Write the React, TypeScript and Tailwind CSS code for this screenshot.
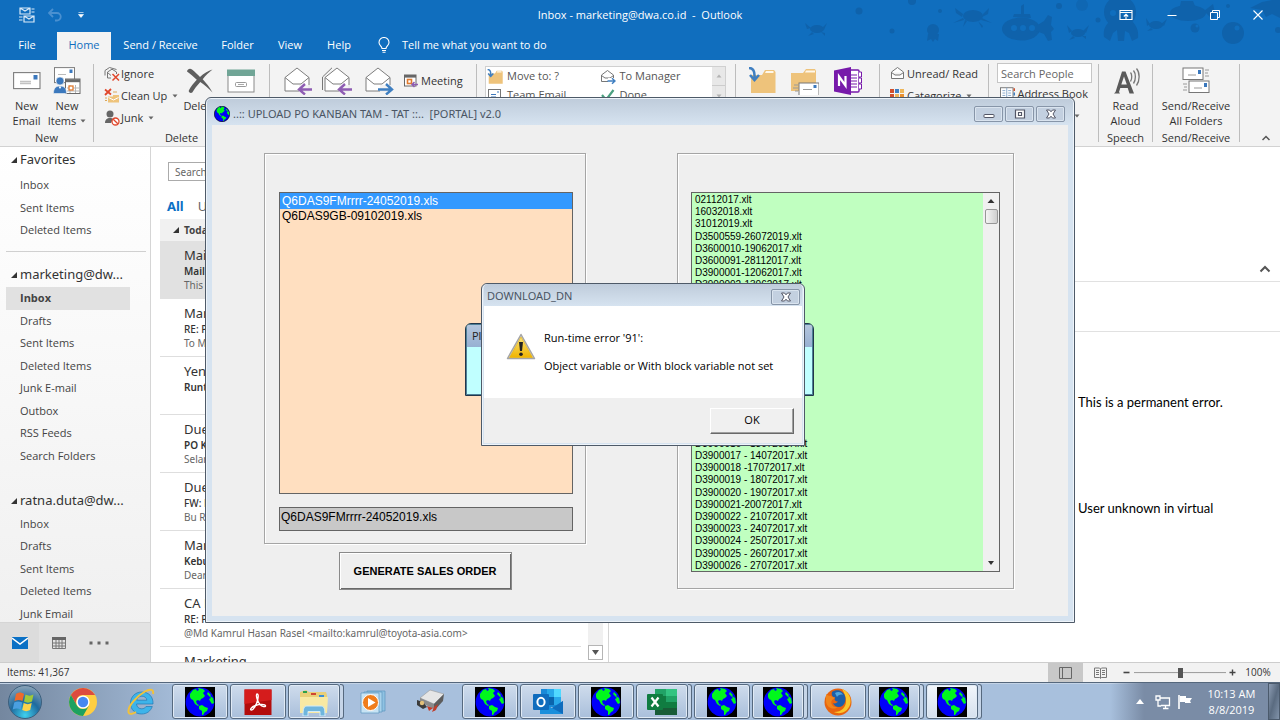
import type { ReactNode } from "react";

/* ---------- small drawings ---------- */

function Globe({ className, square = true }: { className: string; square?: boolean }) {
  return (
    <svg viewBox="0 0 30 30" className={className} aria-hidden="true">
      {square && <rect width="30" height="30" fill="#000" />}
      <circle cx="15" cy="15" r="14.4" fill="#0000fa" stroke="#000" strokeWidth={square ? 0 : 1.2} />
      <path
        d="M5 7 L8 3 L11 2 L12 4 L14 3 L13 1 L18 2 L20 4 L18 6 L20 9 L18 11 L16 12 L15 14 L13 13 L11 14 L12 17 L14 18 L13 19 L10 17 L8 13 L6 12 L5 10 Z"
        fill="#00f81c"
      />
      <path d="M14 19 L17 18 L20 20 L23 21 L22 24 L20 25 L18 28 L17 28 L17 24 L14 22 Z" fill="#00f81c" />
      <path d="M23 5 L26 8 L25 9 L28 11 L29 16 L27 17 L25 14 L24 12 L26 11 L24 9 L22 7 Z" fill="#00f81c" />
    </svg>
  );
}

function Caret({ className = "" }: { className?: string }) {
  return (
    <svg viewBox="0 0 6 4" className={`h-1 w-1.5 ${className}`} aria-hidden="true">
      <path d="M0.5 0.5h5L3 3.5z" fill="#666" />
    </svg>
  );
}

function Triangle() {
  return (
    <svg viewBox="0 0 7 7" className="size-[6px] shrink-0" aria-hidden="true">
      <path d="M7 0v7H0z" fill="#333" />
    </svg>
  );
}

function EnvelopeIcon() {
  return (
    <svg viewBox="0 0 28 28" className="size-7" aria-hidden="true">
      <rect x="0.6" y="5.6" width="26.4" height="16" fill="#fff" stroke="#7d7d7d" strokeWidth="1.1" />
      <rect x="20.5" y="8" width="4" height="4.5" fill="#3b78bd" />
      <path d="M7 14.5h11M7 16.5h11" stroke="#c2c2c2" strokeWidth="1.4" />
    </svg>
  );
}

function NewItemsIcon() {
  return (
    <svg viewBox="0 0 28 28" className="size-7" aria-hidden="true">
      <rect x="1.5" y="0.6" width="20" height="15" fill="#fff" stroke="#7d7d7d" />
      <rect x="16.5" y="2.5" width="3" height="3.5" fill="#3b78bd" />
      <path d="M5 7.5h8" stroke="#bbb" />
      <rect x="12.5" y="12" width="14.5" height="14.5" fill="#fff" stroke="#6a6a6a" />
      <path d="M12.5 13.7h14.5" stroke="#6a6a6a" strokeWidth="3" />
      <path d="M17 18v8M22.500 18v8M14 21h12M14 24h12" stroke="#b5b5b5" />
      <rect x="16" y="19" width="4" height="4" fill="#fff" stroke="#e07a2f" strokeWidth="1.3" />
      <circle cx="7" cy="14" r="4" fill="#3b78bd" stroke="#f3f3f3" strokeWidth="0.6" />
      <path d="M0.500 26.500c0-5 2-7.500 6.500-7.500s6.500 2.500 6.500 7.500z" fill="#3b78bd" stroke="#f3f3f3" strokeWidth="0.6" />
      <path d="M5.500 19.500L7 22l1.500-2.500z" fill="#fff" />
    </svg>
  );
}

function IgnoreIcon() {
  return (
    <svg viewBox="0 0 16 16" className="size-4" aria-hidden="true">
      <path d="M1 9.500V4.500L5.500 1.500L12.500 3.500M3.500 12V6L8 3.200L12.500 6v2M3.500 6.500L7 9.500M3.500 12H7" fill="none" stroke="#777" />
      <path d="M8.500 8l6.500 6.500M15 8l-6.500 6.500" stroke="#e0472c" strokeWidth="1.5" />
    </svg>
  );
}

function CleanUpIcon() {
  return (
    <svg viewBox="0 0 16 16" className="size-4" aria-hidden="true">
      <path d="M1 1.500l6 5M7 1l-6 6" stroke="#e0472c" strokeWidth="1.800" />
      <path d="M4 8.500h5V7h6v7.500H4z" fill="#eec37b" />
      <path d="M4.500 9.500L9.500 12l5-2.500" fill="none" stroke="#fff" />
      <path d="M1 10h2M1 12.500h2M9 4h4" stroke="#dba85a" />
    </svg>
  );
}

function JunkIcon() {
  return (
    <svg viewBox="0 0 16 16" className="size-4" aria-hidden="true">
      <circle cx="6" cy="4" r="3.500" fill="#666" />
      <path d="M1 13c0-3.500 2-5 5-5 1.500 0 2.500.4 3 1l-2 4z" fill="#666" />
      <circle cx="11.500" cy="11.500" r="3.500" fill="#fff" stroke="#e0472c" strokeWidth="1.300" />
      <path d="M9.200 9.200l4.600 4.600" stroke="#e0472c" strokeWidth="1.300" />
    </svg>
  );
}

function DeleteIcon() {
  return (
    <svg viewBox="0 0 28 28" className="size-7" aria-hidden="true">
      <path
        d="M1 4.500C1.500 2 4 1 6 2.500c3 2.200 5.500 5 8 7.500 3.500-3.500 8-6 12.500-7.500-3.500 3-7 6-9.800 9.800 3.500 3.700 7 8 9.800 13.200-4-4-8-7.800-12.200-10.500-3.300 3.500-6 7-8 10.500-1.500 1-4 0-3.500-2 2-4 5-7.500 8-10.700C7.500 9.500 4 6.500 1 4.500z"
        fill="#5e5e5e"
      />
    </svg>
  );
}

function ArchiveIcon() {
  return (
    <svg viewBox="0 0 28 28" className="size-7" aria-hidden="true">
      <rect x="1" y="8" width="26" height="17" fill="#fff" stroke="#8a8a8a" />
      <rect x="0" y="2.500" width="28" height="6.500" fill="#70a596" />
      <rect x="8.500" y="15.500" width="11" height="4" rx="1" fill="#fff" stroke="#999" />
      <path d="M11 17.500h6" stroke="#aaa" />
    </svg>
  );
}

function OpenMail({ arrow, all = false }: { arrow: "left" | "right"; all?: boolean }) {
  return (
    <svg viewBox="0 0 32 28" className="h-7 w-8" aria-hidden="true">
      {all && <path d="M1.500 23V10L11 0.800" fill="none" stroke="#777" />}
      <path d="M4 24V10.500L16 1l12 9.500V24z" fill="#fff" stroke="#7d7d7d" />
      <path d="M4 10.500L12 17h8l8-6.500" fill="none" stroke="#7d7d7d" />
      <path d="M18 18h12v10H18z" fill="#f3f3f3" opacity="0.9" />
      {arrow === "left" ? (
        <path d="M31 22.500H18.500M24 17l-6 5.500 6 5" fill="none" stroke="#8e5db3" strokeWidth="2.400" />
      ) : (
        <path d="M16 22.500h13M24 17l6 5.500-6 5" fill="none" stroke="#3f7fc1" strokeWidth="2.400" />
      )}
    </svg>
  );
}

function MeetingIcon() {
  return (
    <svg viewBox="0 0 14 14" className="size-3.5" aria-hidden="true">
      <rect x="0.500" y="1" width="11.500" height="11" fill="#fff" stroke="#666" />
      <path d="M0.500 2.300h11.500" stroke="#666" strokeWidth="2.600" />
      <rect x="3.500" y="5.500" width="4" height="4" fill="#fff" stroke="#e07a2f" strokeWidth="1.600" />
      <path d="M14 10.500H8M10.500 8L8 10.500l2.500 2.500" fill="none" stroke="#8e5db3" strokeWidth="1.500" />
    </svg>
  );
}

function FolderMoveIcon({ className }: { className: string }) {
  return (
    <svg viewBox="0 0 28 28" className={className} aria-hidden="true">
      <path d="M3 26V8h11l3-5h9l1.500 2V26z" fill="#eec37b" />
      <path d="M18 4h7.500v2H17z" fill="#fff8ea" />
      <path d="M1 1c4 0 6 3 5.500 10M2 8l4.500 5L11 8" fill="none" stroke="#3f7fc1" strokeWidth="2.600" />
    </svg>
  );
}

function FolderRulesIcon() {
  return (
    <svg viewBox="0 0 28 28" className="size-7" aria-hidden="true">
      <path d="M0 24V6h12l3-4h9l1 2V24z" fill="#eec37b" />
      <path d="M15 3.500h9v2H14z" fill="#fff8ea" />
      <rect x="8" y="16" width="20" height="13" fill="#fff" stroke="#777" />
      <rect x="22.500" y="18" width="3" height="3" fill="#3b78bd" />
      <path d="M12 22.500h9M3 18h4M2 21h5M4 24h3" stroke="#999" />
    </svg>
  );
}

function OneNoteIcon() {
  return (
    <svg viewBox="0 0 28 28" className="size-7" aria-hidden="true">
      <rect x="14" y="3" width="11" height="22" rx="1" fill="#fff" stroke="#7719aa" strokeWidth="1.400" />
      <path d="M17 8h6M17 11h6M17 14h6M17 17h6M17 20h6" stroke="#7719aa" />
      <path d="M25 5h2.500v5H25M25 11h2.500v5H25M25 17h2.500v5H25" fill="#fff" stroke="#7719aa" />
      <path d="M0 3.500L17 0v28L0 24.500z" fill="#7719aa" />
      <path d="M5 19V9.500l6.500 9V9" fill="none" stroke="#fff" strokeWidth="2.200" />
    </svg>
  );
}

function SmallMailIcon({ arrow = false }: { arrow?: boolean }) {
  return (
    <svg viewBox="0 0 16 16" className="size-4" aria-hidden="true">
      <path d="M1.500 12.500V6L7.500 1.500 13.500 6v6.500zM1.500 6.500L5 9h5l3.500-2.500" fill="#fff" stroke="#777" />
      {arrow && <path d="M8 9h8v7H8z" fill="#fff" />}
      {arrow && <path d="M7.500 12h7M12 9.200l3 2.800-3 2.800" fill="none" stroke="#3f7fc1" strokeWidth="1.500" />}
    </svg>
  );
}

function TeamMailIcon() {
  return (
    <svg viewBox="0 0 16 16" className="size-4" aria-hidden="true">
      <rect x="1.500" y="1.500" width="12" height="11" fill="#fff" stroke="#777" />
      <path d="M11 3v2M4 6.500h5M4 9h5" stroke="#3b78bd" />
    </svg>
  );
}

function DoneIcon() {
  return (
    <svg viewBox="0 0 16 16" className="size-4" aria-hidden="true">
      <path d="M2 7l4 5 7.500-10" fill="none" stroke="#4ba080" strokeWidth="2.200" />
    </svg>
  );
}

function CategorizeIcon() {
  return (
    <svg viewBox="0 0 14 14" className="mr-0.5 size-3.5" aria-hidden="true">
      <path d="M0 0h4v4H0z" fill="#d04f2b" />
      <path d="M5 0h4v4H5zM5 10h4v4H5z" fill="#3f7fc1" />
      <path d="M10 0h4v4h-4zM5 5h4v4H5z" fill="#eeb65a" />
      <path d="M10 5h4v4h-4zM0 10h4v4H0z" fill="#e9902f" />
      <path d="M0 5h4v4H0z" fill="#d04f2b" />
    </svg>
  );
}

function AddressBookIcon() {
  return (
    <svg viewBox="0 0 16 16" className="mr-px ml-[3px] size-4" aria-hidden="true">
      <rect x="0.500" y="1.500" width="13" height="13" fill="#fff" stroke="#777" />
      <path d="M7 1.500v13M2.500 4.500h3M2.500 7h3M2.500 9.500h3M8.500 4.500h3M8.500 7h3M8.500 9.500h3" stroke="#8aa9cb" />
      <path d="M15 2v3" stroke="#d04f2b" strokeWidth="2" />
      <path d="M15 6.500v3" stroke="#3f7fc1" strokeWidth="2" />
    </svg>
  );
}

function ReadAloudIcon() {
  return (
    <svg viewBox="0 0 28 28" className="size-7" aria-hidden="true">
      <path d="M2 26.500h6l-1-1.500 1.300-4h7.400l1.800 5.500h4.500L13.500 4.500H10L3.500 25zM9.300 17.500L12 9.500l2.800 8z" fill="#5a5a5a" />
      <path d="M18.500 5.500c1.500 1.500 1.800 6.500 0 9M21.500 3.500c2.500 3 2.500 9.500 0 13M24.500 1.500c3.500 4 3.500 12.500 0 17" fill="none" stroke="#777" strokeWidth="1.300" />
    </svg>
  );
}

function SendReceiveIcon() {
  return (
    <svg viewBox="0 0 28 28" className="size-7" aria-hidden="true">
      <rect x="1" y="1" width="20" height="11.500" fill="#fff" stroke="#777" />
      <rect x="16" y="3" width="3" height="4" fill="#3b78bd" />
      <path d="M6 8h8M23 3h4M23 6h3M23 9h4" stroke="#999" />
      <rect x="7" y="14" width="20" height="11.500" fill="#fff" stroke="#777" />
      <rect x="22" y="16" width="3" height="4" fill="#3b78bd" />
      <path d="M12 21h8M1 17h4M2 20h3M1 23h4" stroke="#999" />
    </svg>
  );
}

/* ---------- title bar backdrop ---------- */

function SeaBackdrop() {
  return (
    <svg viewBox="0 0 500 60" className="absolute top-0 right-0 h-[60px] w-[500px]" aria-hidden="true">
      <g fill="#0f62ab">
        <ellipse cx="241" cy="29" rx="19" ry="11.500" />
        <path d="M233 17l1-3h16l1 4zM241 14V6l3-2v10z" />
        <path d="M256 26l8-5 4-6 4 2-1 8 3 4-3 3 1 8-4 1-4-7-8-3z" />
        <circle cx="340" cy="12" r="16" />
        <path d="M329 22c-4 4-6 8-5 15l6 4 3-8 4-3 1 11h6l1-10 4 2 3 8 6-3c1-8-2-12-5-16z" />
        <circle cx="153" cy="30" r="6" />
        <path d="M148 34l-1 7 4-2 2 3 2-3 3 2 1-7z" />
        <ellipse cx="193" cy="16" rx="10" ry="6" />
        <path d="M183 14l-8-6 1 5 6 4zM203 14l6-6-1 6-6 3zM183 18l-10 5 11-3zM202 18l10 5-11-3zM187 21l-4 6 2-7zM198 21l4 7 1-2z" />
        <ellipse cx="37" cy="29" rx="7" ry="4" />
        <path d="M31 28l-6-5 2 6zM42 28l5-5-3 7zM32 32l-4 4 6-2zM41 32l4 4 0-3z" />
        <ellipse cx="298" cy="33" rx="7" ry="4" />
        <path d="M292 31l-5-6 2 8zM303 31l6-6-3 8zM293 36l-4 4 6-2zM302 36l4 3 0-3z" />
        <ellipse cx="376" cy="25" rx="7" ry="4" />
        <path d="M370 24l-4-6 1 8zM381 24l6-5-3 7zM371 28l-4 3 6-1z" />
        <ellipse cx="408" cy="13" rx="18" ry="8" />
        <path d="M400 6l1-5h12l2 5zM424 11l9-7 2 9-2 7z" />
        <circle cx="453" cy="33" r="11" />
        <circle cx="415" cy="28" r="4.500" />
        <circle cx="79" cy="11" r="3.500" />
        <circle cx="132" cy="1" r="4" />
        <circle cx="112" cy="31" r="2.500" />
        <circle cx="160" cy="11" r="2" />
        <circle cx="279" cy="6" r="3" />
        <circle cx="302" cy="5" r="6" opacity="0.6" />
        <circle cx="318" cy="20" r="2.500" />
        <circle cx="448" cy="6" r="2" />
        <path d="M470 8l12-6 10-2h8v18l-8-4-6 3-4-7z" />
        <circle cx="498" cy="30" r="3" />
      </g>
      <g fill="#106ebe">
        <circle cx="234" cy="28" r="3" />
        <circle cx="243" cy="28" r="3" />
        <circle cx="252" cy="28" r="3" />
        <circle cx="333" cy="13" r="3" />
        <circle cx="345" cy="13" r="3" />
        <circle cx="457" cy="28" r="2.500" />
        <circle cx="417" cy="26" r="1.500" />
      </g>
    </svg>
  );
}

/* ---------- ribbon ---------- */

function Group({ width, label, children }: { width: string; label?: string; children: ReactNode }) {
  return (
    <div className={`flex shrink-0 ${width}`}>
      <div className="flex min-w-0 flex-1 flex-col">
        <div className="flex flex-1">{children}</div>
        <div className="h-4 text-center leading-4">{label}</div>
      </div>
      <div className="my-1 w-px bg-[#bdbdbd]" />
    </div>
  );
}

function BigButton({ icon, lines, width, caret = false }: { icon: ReactNode; lines: string[]; width: string; caret?: boolean }) {
  return (
    <button type="button" className={`flex flex-col items-center gap-[3px] self-start pt-[7px] leading-[15px] ${width}`}>
      {icon}
      <span className="flex flex-col items-center">
        {lines.map((line, i) => (
          <span key={line} className="flex items-center gap-1 whitespace-nowrap">
            {line}
            {caret && i === lines.length - 1 && <Caret />}
          </span>
        ))}
      </span>
    </button>
  );
}

function SmallButton({ icon, text, caret = false }: { icon: ReactNode; text: string; caret?: boolean }) {
  return (
    <button type="button" className="flex h-[22px] items-center gap-px whitespace-nowrap">
      {icon}
      <span className="pr-1">{text}</span>
      {caret && <Caret />}
    </button>
  );
}

function Ribbon() {
  return (
    <div className="flex h-[87px] shrink-0 overflow-hidden border-b border-[#d2d2d2] bg-[#f3f3f3] text-[11px] text-[#333]">
      <Group width="w-[94px]" label="New">
        <div className="flex pl-[6px]">
          <BigButton width="w-[41px]" icon={<EnvelopeIcon />} lines={["New", "Email"]} />
          <BigButton width="w-[40px]" icon={<NewItemsIcon />} lines={["New", "Items"]} caret />
        </div>
      </Group>
      <Group width="w-[176px]" label="Delete">
        <div className="flex w-[86px] flex-col pt-[3px] pl-[10px]">
          <SmallButton icon={<IgnoreIcon />} text="Ignore" />
          <SmallButton icon={<CleanUpIcon />} text="Clean Up" caret />
          <SmallButton icon={<JunkIcon />} text="Junk" caret />
        </div>
        <BigButton width="w-[40px]" icon={<DeleteIcon />} lines={["Delete"]} />
        <BigButton width="w-[41px]" icon={<ArchiveIcon />} lines={[]} />
      </Group>
      <Group width="w-[207px]">
        <div className="flex pl-[7px]">
          <BigButton width="w-[40px]" icon={<OpenMail arrow="left" />} lines={[]} />
          <BigButton width="w-[40px]" icon={<OpenMail arrow="left" all />} lines={[]} />
          <BigButton width="w-[42px]" icon={<OpenMail arrow="right" />} lines={[]} />
        </div>
        <button type="button" className="mt-[10px] flex h-[22px] items-center gap-[3px] pl-[5px]">
          <MeetingIcon /> Meeting
        </button>
      </Group>
      <Group width="w-[259px]">
        <div className="mt-1.5 ml-2 flex h-16 w-[241px] border border-[#d0d0d0] bg-white text-[#555]">
          <div className="grid flex-1 auto-rows-[19px] grid-cols-2 pl-px">
            <button type="button" className="flex items-center gap-1"><FolderMoveIcon className="size-4" />Move to: ?</button>
            <button type="button" className="flex items-center gap-1"><SmallMailIcon arrow />To Manager</button>
            <button type="button" className="flex items-center gap-1"><TeamMailIcon />Team Email</button>
            <button type="button" className="flex items-center gap-1"><DoneIcon />Done</button>
          </div>
          <div className="flex w-[13px] flex-col bg-[#e8e8e8]">
            <button type="button" aria-label="Scroll up" className="flex h-[19px] items-center justify-center border-b border-[#ccc]"><Caret className="rotate-180 opacity-40" /></button>
            <button type="button" aria-label="Scroll down" className="flex h-[19px] items-center justify-center"><Caret className="opacity-40" /></button>
          </div>
        </div>
      </Group>
      <Group width="w-[144px]">
        <div className="flex pl-[5px]">
          <BigButton width="w-[42px]" icon={<FolderMoveIcon className="size-7" />} lines={[]} />
          <BigButton width="w-[43px]" icon={<FolderRulesIcon />} lines={[]} />
          <BigButton width="w-[43px]" icon={<OneNoteIcon />} lines={[]} />
        </div>
      </Group>
      <Group width="w-[109px]">
        <div className="flex flex-col pt-[3px] pl-[10px]">
          <SmallButton icon={<SmallMailIcon />} text="Unread/ Read" />
          <SmallButton icon={<CategorizeIcon />} text="Categorize" caret />
        </div>
      </Group>
      <Group width="w-[110px]">
        <div className="flex min-w-0 flex-1 flex-col pt-[3px] pr-1.5 pl-2">
          <input aria-label="Search People" placeholder="Search People" className="h-5 w-full border border-[#c6c6c6] bg-white px-[3px] placeholder:text-[#666]" />
          <SmallButton icon={<AddressBookIcon />} text="Address Book" />
          <button type="button" aria-label="Filter Email" className="flex h-[22px] items-center justify-end pr-3"><Caret /></button>
        </div>
      </Group>
      <Group width="w-[54px]" label="Speech">
        <BigButton width="w-[54px]" icon={<ReadAloudIcon />} lines={["Read", "Aloud"]} />
      </Group>
      <Group width="w-[87px]" label="Send/Receive">
        <BigButton width="w-[86px]" icon={<SendReceiveIcon />} lines={["Send/Receive", "All Folders"]} />
      </Group>
      <button type="button" aria-label="Collapse ribbon" className="ml-auto flex items-end pr-[10px] pb-1">
        <svg viewBox="0 0 8 8" className="size-2"><path d="M0.500 6L4 2.500 7.500 6" fill="none" stroke="#555" strokeWidth="1.500" /></svg>
      </button>
    </div>
  );
}

function TitleArea() {
  return (
    <header className="relative shrink-0 bg-[#106ebe] text-white">
      <SeaBackdrop />
      <div className="relative grid h-8 grid-cols-[1fr_auto_1fr] items-center pb-0.5 text-[11px]">
        <div className="flex items-center pl-[19px]">
          <svg viewBox="0 0 16 16" className="size-4" aria-hidden="true">
            <path d="M1 1h10v6H1zM5 9h10v6H5z M1 1l5 3 5-3M5 9l5 3 5-3M12.500 2h3M12.500 5h3M0 10h3.500M0 13h3.500" fill="none" stroke="#d9e9f7" strokeWidth="1.200" />
          </svg>
          <svg viewBox="0 0 14 14" className="ml-[13px] size-3.5" aria-hidden="true">
            <path d="M5 1L1 5l4 4M1.500 5H9a3.500 3.500 0 010 7.500H7" fill="none" stroke="#4a90d0" strokeWidth="1.800" />
          </svg>
          <svg viewBox="0 0 6 6" className="ml-4 size-1.5" aria-hidden="true"><path d="M0.500 0.500h5M0.500 2.500h5L3 5.500z" fill="#fff" stroke="#fff" strokeWidth="0.600" /></svg>
        </div>
        <h1 className="whitespace-pre">Inbox - marketing@dwa.co.id  -  Outlook</h1>
        <div className="flex items-center justify-end">
          <button type="button" aria-label="Ribbon display options" className="pr-[34px]">
            <svg viewBox="0 0 14 12" className="h-3 w-3.5"><path d="M1 1.500h12v9H1zM1 3.500h12M7 10V5.500M4.800 7.500L7 5.300l2.200 2.200" fill="none" stroke="#fff" strokeWidth="1.100" /></svg>
          </button>
          <button type="button" aria-label="Minimize" className="pr-[33px]">
            <svg viewBox="0 0 10 10" className="size-2.5"><path d="M0.500 5.500h9" stroke="#fff" /></svg>
          </button>
          <button type="button" aria-label="Restore" className="pr-[33px]">
            <svg viewBox="0 0 10 10" className="size-2.5"><path d="M0.500 2.500h7v7h-7zM2.500 2.500v-2h7v7h-2" fill="none" stroke="#fff" /></svg>
          </button>
          <button type="button" aria-label="Close" className="pr-[17px]">
            <svg viewBox="0 0 10 10" className="size-2.5"><path d="M0.500 0.500l9 9M9.500 0.500l-9 9" stroke="#fff" strokeWidth="1.100" /></svg>
          </button>
        </div>
      </div>
      <nav className="relative flex h-7 text-[11px] leading-[26px] font-medium">
        <button type="button" className="w-[57px] pr-[3px] pb-0.5">File</button>
        <button type="button" className="w-[54px] bg-[#f3f3f3] pb-0.5 text-[#106ebe]">Home</button>
        <button type="button" className="w-[99px] pb-0.5">Send / Receive</button>
        <button type="button" className="w-[55px] pb-0.5">Folder</button>
        <button type="button" className="w-[50px] pb-0.5">View</button>
        <button type="button" className="w-[48px] pb-0.5">Help</button>
        <button type="button" className="flex items-center gap-3 pb-0.5 pl-[15px]">
          <svg viewBox="0 0 12 16" className="h-4 w-3" aria-hidden="true">
            <path d="M4 11.500C4 9 1 8.500 1 5.500a5 5 0 0110 0c0 3-3 3.500-3 6zM4 13.500h4M4.500 15.300h3" fill="none" stroke="#fff" strokeWidth="1.100" />
          </svg>
          Tell me what you want to do
        </button>
      </nav>
    </header>
  );
}

/* ---------- folder pane and message list ---------- */

function FolderHeading({ text }: { text: string }) {
  return (
    <button type="button" className="flex h-6 w-full shrink-0 items-center gap-[3px] pl-[11px] font-['Noto_Sans',sans-serif] text-[13px] text-[#333]">
      <Triangle />
      {text}
    </button>
  );
}

function FolderList({ items, height, selected }: { items: string[]; height: string; selected?: string }) {
  return (
    <ul className={`grid shrink-0 auto-rows-fr pr-5 pl-1.5 ${height}`}>
      {items.map((item) => (
        <li key={item} className={item === selected ? "flex bg-[#e1e1e1] font-bold" : "flex"}>
          <button type="button" className="flex-1 pl-[14px] text-left">{item}</button>
        </li>
      ))}
    </ul>
  );
}

function FolderPane() {
  return (
    <aside className="flex w-[151px] shrink-0 flex-col border-r border-[#d5d5d5] bg-linear-to-b from-white to-[#efefef] text-[11px] text-[#444]">
      <div className="flex min-h-0 flex-1 flex-col overflow-hidden">
        <div className="flex pt-[1px] pb-0.5">
          <FolderHeading text="Favorites" />
          <button type="button" aria-label="Minimize folder pane" className="w-7 pb-2">
            <svg viewBox="0 0 6 8" className="h-2 w-1.5"><path d="M5 1L2 4l3 3" fill="none" stroke="#444" strokeWidth="1.500" /></svg>
          </button>
        </div>
        <FolderList height="h-[68px]" items={["Inbox", "Sent Items", "Deleted Items"]} />
        <div className="mt-[9px] mr-1 mb-[11px] ml-1.5 h-px shrink-0 bg-[#d0d0d0]" />
        <FolderHeading text="marketing@dw..." />
        <FolderList
          height="h-[180px]"
          selected="Inbox"
          items={["Inbox", "Drafts", "Sent Items", "Deleted Items", "Junk E-mail", "Outbox", "RSS Feeds", "Search Folders"]}
        />
        <div className="h-[22px] shrink-0" />
        <FolderHeading text="ratna.duta@dw..." />
        <FolderList height="h-[112px]" items={["Inbox", "Drafts", "Sent Items", "Deleted Items", "Junk Email"]} />
      </div>
      <div className="flex h-10 shrink-0 border-t border-[#d5d5d5] bg-[#e3e3e3]">
        <button type="button" aria-label="Mail" className="flex w-[39px] items-center justify-center bg-[#dcdcdc]">
          <svg viewBox="0 0 16 12" className="h-3 w-4"><path d="M0 0h16v12H0z" fill="#0a70c5" /><path d="M0 1l8 6 8-6" fill="none" stroke="#fff" strokeWidth="1.400" /></svg>
        </button>
        <button type="button" aria-label="Calendar" className="flex w-10 items-center justify-center">
          <svg viewBox="0 0 14 12" className="h-3 w-3.5">
            <path d="M0 0h14v3H0z" fill="#666" />
            <path d="M0.500 3v8.500h13V3M0 6h14M0 9h14M4 3v9M7 3v9M10 3v9" fill="none" stroke="#777" />
          </svg>
        </button>
        <button type="button" aria-label="More" className="flex w-[39px] items-center justify-center">
          <svg viewBox="0 0 20 4" className="h-1 w-5"><path d="M0.500 0.500h3v3h-3zM8.500 0.500h3v3h-3zM16.500 0.500h3v3h-3z" fill="#666" /></svg>
        </button>
      </div>
    </aside>
  );
}

const MESSAGES = [
  { from: "Mail Delivery", subject: "Mail delivery failed", preview: "This message was created", bold: true },
  { from: "Marketing", subject: "RE: PO Kanban", preview: "To Marketing", bold: false },
  { from: "Yeni", subject: "Runtime error", preview: "", bold: true },
  { from: "Duedate", subject: "PO Kanban", preview: "Selamat pagi", bold: true },
  { from: "Duedate", subject: "FW: PO Kanban", preview: "Bu Ratna", bold: false },
  { from: "Marketing", subject: "Kebutuhan", preview: "Dear all", bold: true },
  { from: "CA Rasel", subject: "RE: PO Kanban", preview: "@Md Kamrul Hasan Rasel <mailto:kamrul@toyota-asia.com>", bold: false },
];

function MessageList() {
  return (
    <section className="flex w-[458px] shrink-0 border-r border-[#d5d5d5] bg-white font-['Noto_Sans',sans-serif] text-[11px]">
      <div className="flex min-w-0 flex-1 flex-col overflow-hidden pl-[9px]">
        <input aria-label="Search current mailbox" placeholder="Search Current Mailbox" className="mt-[15px] ml-2 h-[19px] w-[320px] shrink-0 border border-[#ababab] px-1.5 text-[10px] placeholder:text-[#666]" />
        <div className="mt-[14px] flex h-6 shrink-0 items-center gap-[14px] pl-[7px] text-[13px]">
          <button type="button" className="font-bold text-[#0a70c5]">All</button>
          <button type="button" className="text-[#666]">Unread</button>
        </div>
        <div className="flex h-[22px] shrink-0 items-center gap-[5px] bg-[#f1f1f1] pl-[13px] text-[10px] font-bold text-[#444]">
          <Triangle />
          Today
        </div>
        <ul className="shrink-0">
          {MESSAGES.map((m, i) => (
            <li key={i} className={`flex h-[58px] flex-col border-b pt-[5px] pl-6 ${i === 0 ? "border-[#e1e1e1] bg-[#e1e1e1]" : "border-[#dedede]"}`}>
              <span className="text-[13px] leading-[18px] text-[#333]">{m.from}</span>
              <span className={`text-[10px] leading-[14px] text-[#333] ${m.bold ? "font-semibold" : "font-medium"}`}>{m.subject}</span>
              <span className="text-[10px] leading-[14px] whitespace-nowrap text-[#666]">{m.preview}</span>
            </li>
          ))}
        </ul>
        <div className="shrink-0 pt-[5px] pl-6 text-[13px] leading-[18px] text-[#333]">Marketing</div>
      </div>
      <div className="mr-[5px] mb-0.5 ml-[7px] flex w-[15px] flex-col justify-end bg-[#f0f0f0]">
        <button type="button" aria-label="Scroll down" className="flex h-[15px] items-center justify-center border border-[#b5b5b5] bg-white">
          <svg viewBox="0 0 7 5" className="h-[5px] w-[7px]"><path d="M0 0h7L3.500 5z" fill="#555" /></svg>
        </button>
      </div>
    </section>
  );
}

function ReadingPane() {
  return (
    <section className="flex min-w-0 flex-1 flex-col bg-white font-[Lato,sans-serif] text-[13px] text-black">
      <div className="flex h-[135px] shrink-0 items-end justify-end border-b border-[#e1e1e1] pr-[9px] pb-2">
        <button type="button" aria-label="Collapse header">
          <svg viewBox="0 0 12 8" className="h-2 w-3"><path d="M1.500 6.500L6 2l4.500 4.500" fill="none" stroke="#555" strokeWidth="2" /></svg>
        </button>
      </div>
      <div className="h-[50px] shrink-0 border-b border-[#e1e1e1]" />
      <p className="mt-[60px] shrink-0 pl-[469px] leading-5 whitespace-nowrap">This is a permanent error.</p>
      <p className="mt-[86px] shrink-0 pl-[469px] leading-5 whitespace-nowrap">User unknown in virtual</p>
    </section>
  );
}

function StatusBar() {
  return (
    <footer className="flex h-5 shrink-0 items-center border-t border-[#cdcdcd] bg-[#f2f2f2] text-[10px] text-[#333]">
      <span className="pl-[7px]">Items: 41,367</span>
      <div className="ml-auto flex items-center self-stretch">
        <button type="button" aria-label="Normal view" className="flex w-[35px] items-center justify-center self-stretch bg-[#c8c8c8]">
          <svg viewBox="0 0 13 12" className="h-3 w-[13px]"><path d="M0.500 0.500h12v11H.5zM3.500 0.500v11" fill="none" stroke="#666" /></svg>
        </button>
        <button type="button" aria-label="Reading view" className="flex w-[35px] items-center justify-center">
          <svg viewBox="0 0 13 12" className="h-3 w-[13px]"><path d="M0.500 1h5l1 1 1-1h5v9.500h-5l-1 1-1-1h-5zM6.500 2v9M2 3.500h3M2 5.500h3M2 7.500h3M8 3.500h3M8 5.500h3M8 7.500h3" fill="none" stroke="#777" /></svg>
        </button>
        <button type="button" aria-label="Zoom out" className="w-4">
          <svg viewBox="0 0 7 7" className="mx-auto size-[7px]"><path d="M0.500 3.500h6" stroke="#444" strokeWidth="1.600" /></svg>
        </button>
        <input
          type="range"
          aria-label="Zoom"
          defaultValue={50}
          className="h-3 w-[92px] appearance-none bg-linear-to-b from-transparent from-45% via-[#999] via-45% to-transparent to-55% [&::-webkit-slider-thumb]:h-2.5 [&::-webkit-slider-thumb]:w-[5px] [&::-webkit-slider-thumb]:appearance-none [&::-webkit-slider-thumb]:bg-[#555]"
        />
        <button type="button" aria-label="Zoom in" className="w-3">
          <svg viewBox="0 0 7 7" className="mx-auto size-[7px]"><path d="M0.500 3.500h6M3.500 0.500v6" stroke="#444" strokeWidth="1.400" /></svg>
        </button>
        <span className="w-[42px] pr-0.5 text-center">100%</span>
      </div>
    </footer>
  );
}

/* ---------- taskbar ---------- */

function StartOrb() {
  return (
    <svg viewBox="0 0 36 36" className="size-9" aria-hidden="true">
      <defs>
        <radialGradient id="orb" cx="0.5" cy="0.9" r="0.9">
          <stop offset="0" stopColor="#3fd0ee" />
          <stop offset="0.5" stopColor="#1e6a9e" />
          <stop offset="1" stopColor="#8fa5b8" />
        </radialGradient>
      </defs>
      <circle cx="18" cy="18" r="16.500" fill="url(#orb)" stroke="#3c5f7d" />
      <path d="M9 10c3-2 5-2 8 0l-1.500 7c-3-1.500-5-1.500-8 0z" fill="#ee6a2c" />
      <path d="M18.500 10.500c3 1.500 5 1.500 8 0l-1.500 7c-3 1.500-5 1.500-8 0z" fill="#9fc93a" />
      <path d="M7.200 18.500c3-1.500 5-1.500 8 0l-1.500 7c-3-1.500-5-1.500-8 0z" fill="#4a9fe0" />
      <path d="M16.700 19c3 1.500 5 1.500 8 0l-1.500 7c-3 1.500-5 1.500-8 0z" fill="#fbd34a" />
    </svg>
  );
}

function ChromeIcon() {
  return (
    <svg viewBox="0 0 28 28" className="size-7" aria-hidden="true">
      <circle cx="14" cy="14" r="14" fill="#ffce41" />
      <path d="M1.900 7A14 14 0 0126.100 7H14a7 7 0 00-6.100 10.500z" fill="#dd4b3e" />
      <path d="M1.900 7A14 14 0 0014 28l6.100-10.500A7 7 0 017.900 17.500z" fill="#1da160" />
      <circle cx="14" cy="14" r="6.600" fill="#fff" />
      <circle cx="14" cy="14" r="5.200" fill="#4688f1" />
    </svg>
  );
}

function IeIcon() {
  return (
    <svg viewBox="0 0 28 28" className="size-7" aria-hidden="true">
      <path d="M26 16H9.500c.3 3 2.300 4.800 5.200 4.800 2 0 3.400-.8 4.300-2.300h6.300C23.600 23 20 26 14.500 26 8 26 3.500 21.500 3.500 15.200S8.200 4 14.700 4C21.500 4 26.500 8.500 26 16zM9.700 12.200h10.200c-.4-2.500-2.300-4-5-4s-4.700 1.500-5.200 4z" fill="#3db4ea" stroke="#2178b5" strokeWidth="0.700" />
      <path d="M26 6c1-4-2-6-8-2.500C10 8 2 17 1.500 22.500 1 27 5 26.500 9 24" fill="none" stroke="#f2c23a" strokeWidth="2" />
    </svg>
  );
}

function AcrobatIcon() {
  return (
    <svg viewBox="0 0 28 28" className="size-7" aria-hidden="true">
      <rect x="0.500" y="1.500" width="27" height="25.500" fill="#b30c0c" />
      <path d="M0.500 1.500h27V12l-27 4z" fill="#d51c1c" />
      <path d="M13 6c2 0 1 4.500.5 6.500C12.500 17 9.500 22 7.500 22c-2 0-.5-3 4-4.500 4-1.500 9.500-1.500 10 .3.400 1.700-3.500.7-5.500-1.300C13.500 14 11.500 6.500 13 6z" fill="none" stroke="#fff" strokeWidth="1.400" />
    </svg>
  );
}

function ExplorerIcon() {
  return (
    <svg viewBox="0 0 30 28" className="h-7 w-[30px]" aria-hidden="true">
      <path d="M1 4l6-2 3 2h17l1 3v18H1z" fill="#e9cf78" />
      <rect x="4" y="3" width="4" height="2" fill="#2ca04b" />
      <rect x="12" y="5" width="5" height="2" fill="#cf4433" />
      <rect x="20" y="7" width="5" height="2" fill="#3a8ed8" />
      <path d="M1 9h28l-1 16H1z" fill="#f8e9a3" />
      <path d="M4 28c0-8 1-10 4-10h14c3 0 4 2 4 10h-5v-4.500H9V28z" fill="#6fb6dd" stroke="#d3ecf8" />
    </svg>
  );
}

function PlayerIcon() {
  return (
    <svg viewBox="0 0 28 28" className="size-7" aria-hidden="true">
      <path d="M8 3h18v20H8z" fill="#8fc2e2" stroke="#5b97bf" strokeWidth="0.700" />
      <path d="M5 4h18v20H5z" fill="#a9d3ec" stroke="#5b97bf" strokeWidth="0.700" />
      <path d="M2 5h18v20H2z" fill="#c7e3f4" stroke="#5b97bf" strokeWidth="0.700" />
      <circle cx="11.500" cy="14.500" r="8" fill="#f07d1c" stroke="#fff" />
      <path d="M9 10l7.500 4.500L9 19z" fill="#fff" />
    </svg>
  );
}

function ScannerIcon() {
  return (
    <svg viewBox="0 0 28 28" className="size-7" aria-hidden="true">
      <path d="M3 10L13 2l14 4-10 10z" fill="#e6e6e6" stroke="#999" strokeWidth="0.600" />
      <path d="M3 10l14 6v5L3 14z" fill="#8b8b8b" />
      <path d="M17 16L27 6l-1 7-9 10z" fill="#5d5d5d" />
      <path d="M0 12l6 2 4 5-4 2-6-4z" fill="#3b3b3b" />
      <circle cx="5" cy="15" r="2.200" fill="#e2c07a" />
      <path d="M10 18l6 2-4 3z" fill="#c23d2a" />
      <path d="M17 19l4-3-2 6-4 2z" fill="#c23d2a" />
    </svg>
  );
}

function OutlookIcon() {
  return (
    <svg viewBox="0 0 32 28" className="h-7 w-8" aria-hidden="true">
      <rect x="9" y="1" width="20" height="18" fill="#1989d8" />
      <rect x="15" y="1" width="7" height="8" fill="#28a8ea" />
      <rect x="22" y="1" width="7" height="8" fill="#50d9ff" />
      <rect x="15" y="9" width="7" height="8" fill="#0a64ad" />
      <rect x="22" y="9" width="7" height="8" fill="#28a8ea" />
      <path d="M8 13l12 7 11-7v13H8z" fill="#1a8fdc" />
      <path d="M31 13v13L20 20z" fill="#0f6cbd" />
      <rect x="1" y="6" width="16" height="16" rx="1" fill="#0f6cbd" />
      <ellipse cx="9" cy="14" rx="3.600" ry="4.200" fill="none" stroke="#fff" strokeWidth="2" />
    </svg>
  );
}

function ExcelIcon() {
  return (
    <svg viewBox="0 0 30 28" className="h-7 w-[30px]" aria-hidden="true">
      <rect x="8" y="1" width="22" height="26" fill="#21a366" />
      <rect x="19" y="1" width="11" height="7" fill="#33c481" />
      <rect x="8" y="8" width="11" height="12" fill="#107c41" />
      <rect x="19" y="14" width="11" height="6" fill="#107c41" />
      <rect x="8" y="20" width="22" height="7" fill="#185c37" />
      <rect x="0" y="6" width="16" height="16" rx="1" fill="#107c41" />
      <path d="M4.500 9.500l7 9M11.500 9.500l-7 9" stroke="#fff" strokeWidth="2.200" />
    </svg>
  );
}

function FirefoxIcon() {
  return (
    <svg viewBox="0 0 28 28" className="size-7" aria-hidden="true">
      <circle cx="14" cy="14" r="13.500" fill="#e8640f" />
      <path d="M18 1c8 3 10.500 12 7 18-4 7-11 7-15 5 8 0 12-5 12-11 0-5-2-8-4-12z" fill="#fbc62c" />
      <path d="M8 4c4-3 11-2 13 4 1.500 5-1 11-6 11-3 0-5-1.500-6-4 2 1 4 0 5-1.500-3 0-4-2-3-4-2-.5-4-2-3-5.500z" fill="#1d5fa8" />
      <path d="M11 5c3-2 7-1 8 2-2-1-5 0-6 2z" fill="#4fa6dc" />
      <path d="M2 6c1 1 3 2 5 2 1 1 3 1.500 4 1.500-.5 1.500-3 2-3.500 3.500C6.500 17 10 20 14 19c-5 4-12 0-12-6z" fill="#f0851b" />
    </svg>
  );
}

type Task = { name: string; icon: ReactNode; frame: "none" | "single" | "stack" | "active" };

const globe = <Globe className="size-[30px]" />;

const TASKS: Task[] = [
  { name: "Chrome", icon: <ChromeIcon />, frame: "none" },
  { name: "Internet Explorer", icon: <IeIcon />, frame: "none" },
  { name: "Portal", icon: globe, frame: "single" },
  { name: "Acrobat", icon: <AcrobatIcon />, frame: "single" },
  { name: "Explorer", icon: <ExplorerIcon />, frame: "stack" },
  { name: "Media Player", icon: <PlayerIcon />, frame: "none" },
  { name: "Scanner", icon: <ScannerIcon />, frame: "none" },
  { name: "Portal", icon: globe, frame: "single" },
  { name: "Outlook", icon: <OutlookIcon />, frame: "single" },
  { name: "Portal", icon: globe, frame: "single" },
  { name: "Excel", icon: <ExcelIcon />, frame: "stack" },
  { name: "Portal", icon: globe, frame: "single" },
  { name: "Portal", icon: globe, frame: "stack" },
  { name: "Firefox", icon: <FirefoxIcon />, frame: "single" },
  { name: "Portal", icon: globe, frame: "stack" },
  { name: "Portal", icon: globe, frame: "active" },
];

function TaskButton({ task }: { task: Task }) {
  if (task.frame === "none") {
    return (
      <button type="button" aria-label={task.name} className="flex w-[58px] shrink-0 items-center justify-center pr-1">
        {task.icon}
      </button>
    );
  }
  const stacked = task.frame !== "single";
  const tone = task.frame === "active" ? "from-[#f2f6fb] to-[#d5e0ee]" : "from-[#cfdcec] to-[#a9bfdb]";
  return (
    <button type="button" aria-label={task.name} className="flex w-[58px] shrink-0 pt-px pr-[2px] pb-px">
      <span className={`flex flex-1 items-center justify-center rounded-[3px] border border-[#56697f] bg-linear-to-b shadow-[inset_0_0_0_1px_#e0eaf5] ${tone}`}>{task.icon}</span>
      {stacked && <span className="w-1 self-stretch rounded-r-[3px] border border-l-0 border-[#56697f] bg-[#c6d5e8]" />}
    </button>
  );
}

function Taskbar() {
  return (
    <div className="flex h-[38px] shrink-0 border-t border-[#55677c] bg-linear-to-r from-[#74879f] via-[#a8c0dd] via-15% to-[#a8c0dd] shadow-[inset_0_1px_0_#c3d3e6]">
      <button type="button" aria-label="Start" className="flex w-14 shrink-0 items-center pl-[7px]"><StartOrb /></button>
      <div className="flex min-w-0 flex-1">
        {TASKS.map((t, i) => <TaskButton key={i} task={t} />)}
      </div>
      <div className="flex w-[170px] shrink-0 items-center bg-linear-to-r from-transparent to-[#7a8ca6] to-20% text-[11px] text-white">
        <svg viewBox="0 0 8 5" className="ml-[26px] h-[5px] w-2" aria-hidden="true"><path d="M0 5L4 0l4 5z" fill="#fff" /></svg>
        <svg viewBox="0 0 16 16" className="ml-[11px] size-4" aria-hidden="true">
          <path d="M5 4h9.500v7.500H6M8 14.500h5.500M10.500 11.500v3M1 2h4v4H1zM3 6v6h3" fill="none" stroke="#fff" strokeWidth="1.300" />
        </svg>
        <svg viewBox="0 0 16 16" className="ml-1.5 size-4" aria-hidden="true">
          <path d="M2 1v14" stroke="#fff" strokeWidth="1.600" />
          <path d="M3 2h6v2h6l-2 3 1 2H8V8H3z" fill="#fff" />
        </svg>
        <div className="flex flex-1 flex-col items-center pl-0.5 leading-4">
          <span>10:13 AM</span>
          <span>8/8/2019</span>
        </div>
        <button type="button" aria-label="Show desktop" className="w-3 self-stretch border border-[#4b5a6c] bg-linear-to-br from-[#8d9db3] via-[#5a6b80] to-[#8193aa]" />
      </div>
    </div>
  );
}

/* ---------- floating windows ---------- */

function CaptionButton({ kind }: { kind: "min" | "max" | "close" }) {
  const label = { min: "Minimize", max: "Maximize", close: "Close" }[kind];
  return (
    <button type="button" aria-label={label} className="flex h-4 w-[29px] items-center justify-center rounded-[2px] border border-[#8795a8] bg-[#c3d0e0] shadow-[inset_0_0_0_1px_#dae4ef]">
      <svg viewBox="0 0 12 10" className="h-2.5 w-3" aria-hidden="true">
        {kind === "min" && <rect x="1" y="5.500" width="10" height="3" rx="0.500" fill="#fff" stroke="#535666" />}
        {kind === "max" && <path d="M1.500 1h9v8h-9zM4.500 3.500h3v3h-3z" fill="#fff" stroke="#535666" strokeWidth="1.200" />}
        {kind === "close" && (
          <path d="M1.500 1h3L6 2.800 7.500 1h3L8 5l2.500 4h-3L6 7.200 4.500 9h-3L4 5z" fill="#fff" stroke="#535666" />
        )}
      </svg>
    </button>
  );
}

const FILES = [
  "02112017.xlt", "16032018.xlt", "31012019.xlt", "D3500559-26072019.xlt", "D3600010-19062017.xlt", "D3600091-28112017.xlt",
  "D3900001-12062017.xlt", "D3900002-13062017.xlt", "D3900003-14062017.xlt", "D3900004-15062017.xlt", "D3900005-16062017.xlt",
  "D3900006-19062017.xlt", "D3900007-20062017.xlt", "D3900008-21062017.xlt", "D3900009-22062017.xlt", "D3900010-03072017.xlt",
  "D3900011-04072017.xlt", "D3900012-05072017.xlt", "D3900013-06072017.xlt", "D3900014-07072017.xlt", "D3900016 - 13072017.xlt",
  "D3900017 - 14072017.xlt", "D3900018 -17072017.xlt", "D3900019 - 18072017.xlt", "D3900020 - 19072017.xlt", "D3900021-20072017.xlt",
  "D3900022 - 21072017.xlt", "D3900023 - 24072017.xlt", "D3900024 - 25072017.xlt", "D3900025 - 26072017.xlt", "D3900026 - 27072017.xlt",
];

function PortalWindow() {
  return (
    <section aria-label="Upload PO Kanban" className="absolute top-[97px] left-[205px] flex w-[870px] flex-col rounded-t-md border border-[#4e5a68] bg-[#d6e3f0] px-[6px] pb-[6px] shadow-[inset_0_0_0_1px_#eef4fa]">
      <div className="-mx-[5px] mt-px flex h-[26px] items-center rounded-t bg-linear-to-b from-[#bfccdb] to-[#d6e3f0] pt-1 pr-2 pl-[7px]">
        <Globe className="size-4" square={false} />
        <h2 className="flex-1 pl-[3px] font-['Noto_Sans',sans-serif] text-[11px] whitespace-pre text-[#4a5563]">..:: UPLOAD PO KANBAN TAM - TAT ::..  [PORTAL] v2.0</h2>
        <div className="flex gap-0.5">
          <CaptionButton kind="min" />
          <CaptionButton kind="max" />
          <CaptionButton kind="close" />
        </div>
      </div>
      <div className="flex h-[491px] items-start justify-between bg-[#efefef] pt-7 pr-[54px] pl-[52px] font-['Liberation_Sans',sans-serif] text-black">
        <div className="flex w-[322px] flex-col items-center gap-2">
          <div className="flex w-full flex-col gap-[13px] border border-[#a5a5a5] pt-[38px] pr-3 pb-3 pl-[14px] shadow-[inset_1px_1px_0_#fff,1px_1px_0_#fff]">
            <ul role="listbox" aria-label="Source files" className="h-[302px] border border-[#646464] bg-[#ffdfc0] text-[12px] leading-[15px]">
              <li role="option" aria-selected="true" className="bg-[#3399ff] pt-px pl-0.5 text-white">Q6DAS9FMrrrr-24052019.xls</li>
              <li role="option" aria-selected="false" className="pl-0.5">Q6DAS9GB-09102019.xls</li>
            </ul>
            <input aria-label="Selected file" readOnly value="Q6DAS9FMrrrr-24052019.xls" className="h-6 w-full border border-[#646464] bg-[#c8c8c8] px-px pb-1 text-[12px]" />
          </div>
          <button type="button" className="h-[38px] w-[173px] border border-[#8a8a8a] text-[11px] font-bold whitespace-nowrap shadow-[inset_1px_1px_0_#fff,inset_-1px_-1px_0_#696969]">
            GENERATE SALES ORDER
          </button>
        </div>
        <div className="w-[337px] border border-[#a5a5a5] px-[13px] pt-[38px] pb-4 shadow-[inset_1px_1px_0_#fff,1px_1px_0_#fff]">
          <div className="flex h-[380px] border border-[#646464] bg-[#c0ffc0]">
            <ul role="listbox" aria-label="Templates" className="grid flex-1 auto-rows-fr pl-[3px] text-[10px] leading-[13px]">
              {FILES.map((f) => (
                <li key={f} role="option" aria-selected="false" className="min-h-0">{f}</li>
              ))}
            </ul>
            <div className="flex w-4 flex-col items-center bg-[#f0f0f0]">
              <svg viewBox="0 0 16 16" className="size-4 shrink-0" aria-hidden="true"><path d="M4.500 10h7L8 6z" fill="#333" /></svg>
              <div className="h-[15px] w-[13px] rounded-[2px] border border-[#979797] bg-linear-to-r from-[#f5f5f5] to-[#cfcfcf]" />
              <svg viewBox="0 0 16 16" className="mt-auto size-4 shrink-0" aria-hidden="true"><path d="M5 6h6L8 10z" fill="#333" /></svg>
            </div>
          </div>
        </div>
      </div>
    </section>
  );
}

function ProgressWindow() {
  return (
    <section aria-label="Progress" className="absolute top-[323px] left-[465px] flex h-[73px] w-[349px] flex-col overflow-hidden rounded-t-md border border-[#22364a] bg-[#c0ffff] shadow-[inset_0_0_0_1px_#4d7f97]">
      <h2 className="m-px h-[22px] shrink-0 bg-linear-to-b from-[#b4c6dd] to-[#97b0d2] pl-[5px] text-[11px] leading-[22px] font-medium text-[#222]">Please Wait</h2>
    </section>
  );
}

function ErrorDialog() {
  return (
    <section role="alertdialog" aria-labelledby="dialog-title" className="absolute top-[283px] left-[481px] flex w-[324px] flex-col rounded-t-md border border-[#4e5a68] bg-[#d6e3f0] px-0.5 pb-0.5 text-[11px] text-black shadow-[inset_0_0_0_1px_#eef4fa]">
      <div className="flex h-[22px] items-center justify-between rounded-t bg-linear-to-b from-[#bfccdb] to-[#d6e3f0] pt-[3px] pr-0.5 pl-[3px]">
        <h2 id="dialog-title" className="font-['Noto_Sans',sans-serif] text-[#4a5563]">DOWNLOAD_DN</h2>
        <CaptionButton kind="close" />
      </div>
      <div className="flex h-[92px] gap-2 bg-white pt-6 pl-[22px]">
        <svg viewBox="0 0 30 28" className="mt-[3px] h-7 w-[30px] shrink-0" aria-hidden="true">
          <defs>
            <linearGradient id="warn" x1="0" y1="0" x2="0" y2="1">
              <stop offset="0" stopColor="#f9e37a" />
              <stop offset="1" stopColor="#f0b400" />
            </linearGradient>
          </defs>
          <path d="M15 1.500L28.500 25.500h-27z" fill="#d9d9d9" stroke="#a5a5a5" strokeWidth="1.500" strokeLinejoin="round" />
          <path d="M15 4L26.500 24.500h-23z" fill="url(#warn)" stroke="#e8b000" strokeWidth="0.600" />
          <path d="M13 9h4l-1 9h-2z" fill="#222" />
          <circle cx="15" cy="21.300" r="1.800" fill="#222" />
        </svg>
        <div className="flex flex-col gap-3 leading-4 whitespace-nowrap">
          <p>Run-time error '91':</p>
          <p>Object variable or With block variable not set</p>
        </div>
      </div>
      <div className="flex h-[45px] items-center justify-end bg-[#efefef] pr-2">
        <button type="button" className="h-[26px] w-[84px] border border-t-white border-r-[#696969] border-b-[#696969] border-l-white bg-[#f0f0f0] shadow-[inset_-1px_-1px_0_#a0a0a0]">OK</button>
      </div>
    </section>
  );
}

export default function App() {
  return (
    <div className="relative flex h-screen min-h-[720px] w-full flex-col overflow-hidden bg-white font-['Open_Sans',sans-serif]">
      <TitleArea />
      <Ribbon />
      <main className="flex min-h-0 flex-1">
        <FolderPane />
        <MessageList />
        <ReadingPane />
      </main>
      <StatusBar />
      <Taskbar />
      <PortalWindow />
      <ProgressWindow />
      <ErrorDialog />
    </div>
  );
}
